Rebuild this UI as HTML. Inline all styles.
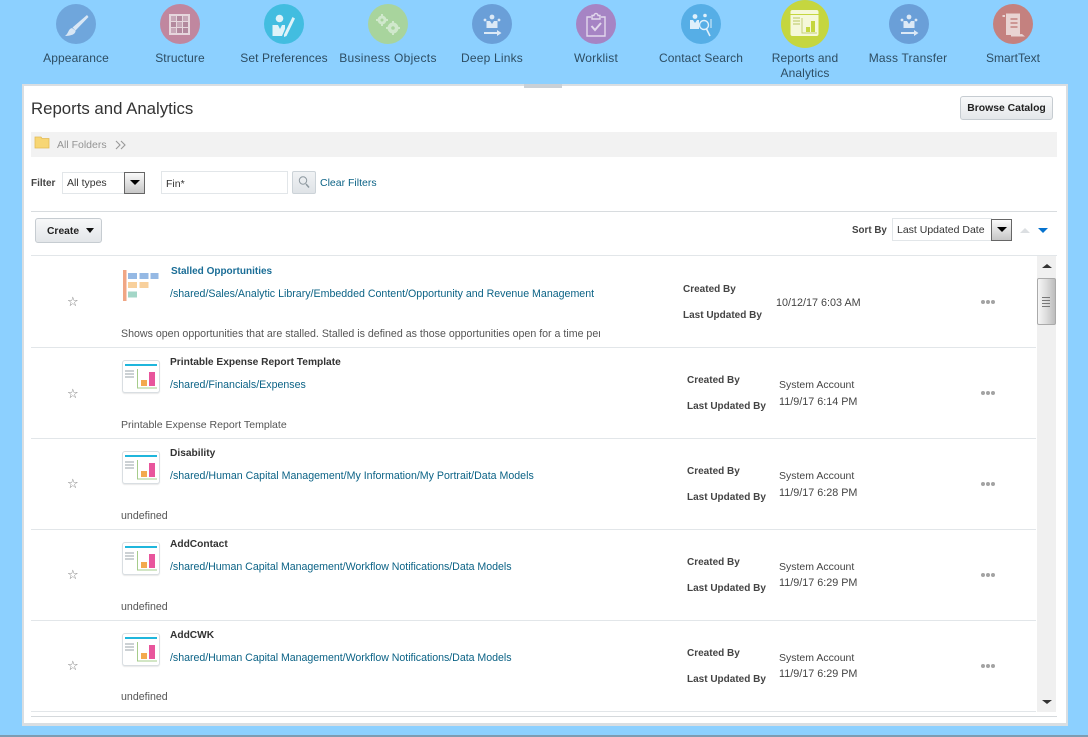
<!DOCTYPE html>
<html><head><meta charset="utf-8"><style>
html,body{margin:0;padding:0}
body{width:1088px;height:737px;overflow:hidden;background:#8cd0ff;position:relative;font-family:"Liberation Sans",sans-serif;font-size:10px;color:#333}
.a,.a *{box-sizing:border-box}
.a{position:absolute;white-space:nowrap}
.c{position:absolute;border-radius:50%;width:40px;height:40px;top:3.5px}
.c svg{position:absolute;left:0;top:0}
.n{position:absolute;width:104px;text-align:center;top:51px;font-size:12px;line-height:15px;color:#2d4d63;white-space:normal;letter-spacing:.1px}
.l{color:#0c6386;font-size:10.630px;line-height:13px}
.b{font-weight:bold}
.t{font-weight:bold;font-size:10.200px;line-height:13px;color:#333}
.hr{position:absolute;left:31px;width:1005px;height:1px;background:#e2e6e9}
.dots{position:absolute;width:16px;height:4px;left:981px}
.dots i{float:left;width:4px;height:4px;border-radius:50%;background:#a3a3a3;margin-right:1px}
.ddb{position:absolute;box-sizing:border-box;width:21px;height:22px;border:1px solid #666;background:linear-gradient(#fafafa,#c6c6c6)}
.ddb:after{content:"";position:absolute;left:5px;top:7px;border:5px solid transparent;border-top:5px solid #000;border-bottom:0}
.tile{position:absolute;box-sizing:border-box;left:122px;width:38px;height:33px;border:1px solid #d9dee2;border-radius:3px;background:#fff;box-shadow:0 1px 1px #e8e8e8}
.d{font-size:10.800px;line-height:13px;color:#444}
.g{font-size:10.630px;line-height:13px;color:#555}
.k{font-size:10px;line-height:13px;color:#444;font-weight:bold}
.s{font-size:13px;line-height:15px;color:#777;font-family:'DejaVu Sans',sans-serif}
</style></head><body>

<div class="c" style="left:56px;background:#6fa6dc"><svg width="40" height="40"><path d="M31 11 L16.500 23.500 L19.500 26.500 L32.500 13Z" fill="#d9e7f5"/><path d="M16 24 C12 25 13 29 9 32 C15 32 20 30 19.500 26.500Z" fill="#d9e7f5"/></svg></div>
<div class="c" style="left:160px;background:#c0879f"><svg width="40" height="40"><rect x="9" y="10" width="21" height="21" fill="#e6d6dd"/><g fill="#ad8197"><rect x="11" y="12" width="5" height="5" opacity=".55"/><rect x="17" y="12" width="5" height="5" opacity=".9"/><rect x="23" y="12" width="5" height="5" opacity=".55"/><rect x="11" y="18" width="5" height="5" opacity=".9"/><rect x="17" y="18" width="5" height="5" opacity=".55"/><rect x="23" y="18" width="5" height="5" opacity=".9"/><rect x="11" y="24" width="5" height="5" opacity=".55"/><rect x="17" y="24" width="5" height="5" opacity=".9"/><rect x="23" y="24" width="5" height="5" opacity=".9"/></g></svg></div>
<div class="c" style="left:264px;background:#42bde0"><svg width="40" height="40" fill="#dff3f9"><circle cx="15.500" cy="14.500" r="3.800"/><path d="M8.500 21 L14 21 L16 25 L18 21 L21 21 L21 25 L18 32 L8.500 32Z"/><path d="M28.500 13 L31 14.500 L22.500 32 L20 33 L20 30.500Z"/></svg></div>
<div class="c" style="left:368px;background:#a8d49d"><svg width="40" height="40" fill="#d0e8cc"><circle cx="14" cy="16" r="4.500"/><circle cx="25" cy="24" r="5.500"/><circle cx="14" cy="16" r="1.500" fill="#a8d49d"/><circle cx="25" cy="24" r="1.800" fill="#a8d49d"/><path d="M13 10h2v2.500h-2zM13 19.500h2v2.500h-2zM8 15h2.500v2H8zM17.500 15h2.500v2h-2.500zM24 17h2v3h-2zM24 28h2v3h-2zM18 23h3v2h-3zM29 23h3v2h-3z"/></svg></div>
<div class="c" style="left:472px;background:#6a9fd8"><svg width="40" height="40" fill="#dce9f6"><circle cx="20" cy="13" r="2.400"/><circle cx="13" cy="16" r="1.400"/><circle cx="27" cy="16" r="1.400"/><path d="M14.500 17 L18 17 L20 20 L22 17 L25.500 17 L25.500 24 L14.500 24Z"/><path d="M12 28 H25 V26 L29.500 29 L25 32 V30 H12Z"/></svg></div>
<div class="c" style="left:576px;background:#a684c4"><svg width="40" height="40" fill="none" stroke="#e2d8ec" stroke-width="1.400"><path d="M15 13 H11 V32 H29 V13 H25"/><path d="M16 15 V11.500 H18 A2 2 0 0 1 22 11.500 H24 V15 Z"/><path d="M15.500 22 L19 26 L25 19" stroke-width="2"/></svg></div>
<div class="c" style="left:681px;background:#56aee6"><svg width="40" height="40" fill="#dff0fb"><circle cx="14" cy="12.500" r="2.400"/><circle cx="24" cy="11.500" r="1.800"/><path d="M9 16 L12 16 L14 19 L16 16 L18 16 L18 25 L9 25Z"/><circle cx="23" cy="21" r="4.500" fill="none" stroke="#dff0fb" stroke-width="1.400"/><path d="M25.500 25 L29 32" stroke="#dff0fb" stroke-width="1.600"/><path d="M30 15 V24" stroke="#dff0fb"/></svg></div>
<div class="c" style="left:781px;top:0;width:48px;height:48px;background:#c5d63f"><svg width="48" height="48"><rect x="9.500" y="10" width="28" height="26" rx="2" fill="#f5f8da"/><path d="M9.500 14 H37.500 V15 H9.500Z" fill="#c5d63f"/><path d="M12 18 H19 M12 21 H19 M12 24 H19" stroke="#c5d07a" stroke-width="1.300"/><path d="M21 18 V33 H36" fill="none" stroke="#c5d07a"/><rect x="25" y="27" width="4" height="5" fill="#c5d63f"/><rect x="30" y="21" width="4" height="11" fill="#c5d63f"/></svg></div>
<div class="c" style="left:889px;background:#6a9fd8"><svg width="40" height="40" fill="#dce9f6"><circle cx="20" cy="13" r="2.400"/><circle cx="13" cy="16" r="1.400"/><circle cx="27" cy="16" r="1.400"/><path d="M14.500 17 L18 17 L20 20 L22 17 L25.500 17 L25.500 24 L14.500 24Z"/><path d="M12 28 H25 V26 L29.500 29 L25 32 V30 H12Z"/></svg></div>
<div class="c" style="left:993px;background:#c4817f"><svg width="40" height="40"><path d="M13 9.500 H27 V31 H13Z" fill="#e9d3d2"/><path d="M17.500 15 H24.500 M17.500 19 H24.500 M17.500 23 H24.500" stroke="#c4817f" stroke-width="1.400"/><path d="M18 31 L29 30 L32 32.500 H18Z" fill="#e9d3d2"/><rect x="9.500" y="11" width="2.500" height="2" fill="#e9d3d2"/></svg></div>

<div class="n" style="left:24px">Appearance</div>
<div class="n" style="left:128px">Structure</div>
<div class="n" style="left:232px">Set Preferences</div>
<div class="n" style="left:336px;letter-spacing:.3px">Business Objects</div>
<div class="n" style="left:440px;letter-spacing:.2px">Deep Links</div>
<div class="n" style="left:544px;letter-spacing:.2px">Worklist</div>
<div class="n" style="left:649px">Contact Search</div>
<div class="n" style="left:753px">Reports and Analytics</div>
<div class="n" style="left:856px;letter-spacing:.2px">Mass Transfer</div>
<div class="n" style="left:961px;letter-spacing:0">SmartText</div>

<div class="a" style="left:22px;top:84px;width:1046px;height:642px;background:#fff;border:2px solid #d9dee2;border-bottom-width:3px"></div>
<div class="a" style="left:524px;top:84px;width:38px;height:4px;background:#c9d0d6"></div>

<div class="a" style="left:31px;top:98.500px;font-size:16.800px;line-height:20px;color:#333">Reports and Analytics</div>
<div class="a b" style="left:960px;top:96px;width:93px;height:24px;border:1px solid #c6ccd1;border-radius:3px;background:linear-gradient(#f8f9fa,#e4e7ea);font-size:10.400px;line-height:24px;text-align:center;color:#222">Browse Catalog</div>

<div class="a" style="left:31px;top:132px;width:1026px;height:25px;background:#f2f2f2"></div>
<svg class="a" style="left:34px;top:136px" width="16" height="13"><path d="M1 1 H7 L8 2.500 H15 V12 H1Z" fill="#f7d674" stroke="#e3bb55" stroke-width=".8"/></svg>
<div class="a" style="left:57px;top:138.500px;font-size:10.500px;line-height:13px;color:#949494">All Folders</div>
<svg class="a" style="left:115px;top:140px" width="12" height="10" fill="none" stroke="#999" stroke-width="1.100"><path d="M1 1 L5 5 L1 9 M6 1 L10 5 L6 9"/></svg>

<div class="a b" style="left:31px;top:177px;font-size:10px;line-height:13px;color:#444">Filter</div>
<div class="a" style="left:62px;top:172px;width:63px;height:22px;border:1px solid #e2e6e9;border-right:0;font-size:10.500px;line-height:20px;padding-left:4px">All types</div>
<div class="ddb" style="left:124px;top:172px"></div>
<div class="a" style="left:161px;top:171px;width:127px;height:23px;border:1px solid #e2e6e9;font-size:10.500px;line-height:24px;padding-left:4px">Fin*</div>
<div class="a" style="left:292px;top:171px;width:24px;height:23px;border:1px solid #ccd3d8;border-radius:2px;background:linear-gradient(#f0f2f4,#dfe3e7)"></div>
<svg class="a" style="left:297px;top:175px" width="14" height="14" fill="none" stroke="#8d989f"><circle cx="6" cy="5.500" r="3.700" stroke-width="1"/><path d="M9 9 L12 12.500" stroke-width="1.500"/></svg>
<div class="a l" style="left:320px;top:177px;font-size:10.500px">Clear Filters</div>

<div class="a" style="left:31px;top:211px;width:1026px;height:1px;background:#d8dcdf"></div>
<div class="a b" style="left:35px;top:218px;width:67px;height:25px;border:1px solid #c6ccd1;border-radius:3px;background:linear-gradient(#f7f8f9,#e3e6e9);font-size:10.300px;line-height:25px;padding-left:11px;color:#222">Create</div>
<div class="a" style="left:86px;top:228px;border:4px solid transparent;border-top:5px solid #111;border-bottom:0"></div>
<div class="a b" style="left:852px;top:224px;font-size:9.800px;line-height:13px;color:#444">Sort By</div>
<div class="a" style="left:892px;top:218px;width:100px;height:23px;border:1px solid #e2e6e9;font-size:10.500px;line-height:23px;padding-left:4px">Last Updated Date</div>
<div class="ddb" style="left:991px;top:219px"></div>
<div class="a" style="left:1020px;top:228px;border:5.500px solid transparent;border-bottom:5px solid #dcdfe2;border-top:0"></div>
<div class="a" style="left:1038px;top:228px;border:5.500px solid transparent;border-top:5px solid #0572ce;border-bottom:0"></div>

<div class="a" style="left:31px;top:255px;width:1026px;height:1px;background:#e2e6e9"></div>
<div class="a" style="left:1037px;top:256px;width:19px;height:456px;background:#f0f0f0"></div>
<div class="a" style="left:1042px;top:264px;border:5px solid transparent;border-bottom:4px solid #333;border-top:0"></div>
<div class="a" style="left:1042px;top:700px;border:5px solid transparent;border-top:4px solid #333;border-bottom:0"></div>
<div class="a" style="left:1037px;top:278px;width:19px;height:47px;border:1px solid #aaa;border-radius:2px;background:linear-gradient(90deg,#f5f5f5,#dcdcdc 50%,#bcbcbc)"></div>
<svg class="a" style="left:1041px;top:296px" width="10" height="13" stroke="#777"><path d="M1 1.500 H9 M1 4.500 H9 M1 7.500 H9 M1 10.500 H9"/></svg>

<div class="hr" style="top:347px"></div><div class="hr" style="top:438px"></div><div class="hr" style="top:529px"></div><div class="hr" style="top:620px"></div><div class="hr" style="top:711px"></div>
<div class="a" style="left:31px;top:716px;width:1026px;height:1px;background:#d5d9dc"></div>

<!-- row 1 -->
<div class="a s" style="left:67px;top:295px">☆</div>
<svg class="a" style="left:122px;top:269px" width="38" height="33"><rect x="1" y="1" width="3.500" height="31" fill="#f0a684"/><g fill="#95b9e4"><rect x="6" y="4" width="9" height="6"/><rect x="17.500" y="4" width="9" height="6"/><rect x="28.500" y="4" width="8" height="6"/></g><g fill="#f8d09c"><rect x="6" y="13" width="9" height="6"/><rect x="17.500" y="13" width="9" height="6"/></g><rect x="6" y="22.500" width="9" height="6" fill="#a3d6c7"/></svg>
<div class="a b" style="left:171px;top:265px;font-size:10px;line-height:13px;color:#1a6d96">Stalled Opportunities</div>
<div class="a l" style="left:170px;top:288px">/shared/Sales/Analytic Library/Embedded Content/Opportunity and Revenue Management</div>
<div class="a g" style="left:121px;top:328px;width:479px;overflow:hidden">Shows open opportunities that are stalled. Stalled is defined as those opportunities open for a time period</div>
<div class="a k" style="left:683px;top:283px">Created By</div>
<div class="a k" style="left:683px;top:309px">Last Updated By</div>
<div class="a d" style="left:776px;top:297px">10/12/17 6:03 AM</div>
<div class="dots" style="top:300px"><i></i><i></i><i></i></div>

<!-- row 2 -->
<div class="a s" style="left:67px;top:387px">☆</div>
<div class="tile" style="top:360px"><svg width="36" height="31" style="position:absolute;left:0;top:0"><rect x="2" y="3" width="32" height="2" fill="#1fb6dc"/><path d="M2 10 H11 M2 13 H11 M2 16 H11" stroke="#9aa3a8"/><path d="M14.500 8 V27 H34" fill="none" stroke="#a6cc8b"/><rect x="18" y="19" width="6" height="6" fill="#f3a94e"/><rect x="26" y="11" width="6" height="14" fill="#e8559c"/></svg></div>
<div class="a t" style="left:170px;top:356px">Printable Expense Report Template</div>
<div class="a l" style="left:170px;top:379px">/shared/Financials/Expenses</div>
<div class="a g" style="left:121px;top:419px;font-size:10.550px">Printable Expense Report Template</div>
<div class="a k" style="left:687px;top:374px">Created By</div>
<div class="a k" style="left:687px;top:400px">Last Updated By</div>
<div class="a g" style="left:779px;top:379px;color:#444;font-size:10.500px">System Account</div>
<div class="a d" style="left:779px;top:396px">11/9/17 6:14 PM</div>
<div class="dots" style="top:391px"><i></i><i></i><i></i></div>

<!-- row 3 -->
<div class="a s" style="left:67px;top:477px">☆</div>
<div class="tile" style="top:451px"><svg width="36" height="31" style="position:absolute;left:0;top:0"><rect x="2" y="3" width="32" height="2" fill="#1fb6dc"/><path d="M2 10 H11 M2 13 H11 M2 16 H11" stroke="#9aa3a8"/><path d="M14.500 8 V27 H34" fill="none" stroke="#a6cc8b"/><rect x="18" y="19" width="6" height="6" fill="#f3a94e"/><rect x="26" y="11" width="6" height="14" fill="#e8559c"/></svg></div>
<div class="a t" style="left:170px;top:447px">Disability</div>
<div class="a l" style="left:170px;top:470px">/shared/Human Capital Management/My Information/My Portrait/Data Models</div>
<div class="a g" style="left:121px;top:510px">undefined</div>
<div class="a k" style="left:687px;top:465px">Created By</div>
<div class="a k" style="left:687px;top:491px">Last Updated By</div>
<div class="a g" style="left:779px;top:470px;color:#444;font-size:10.500px">System Account</div>
<div class="a d" style="left:779px;top:487px">11/9/17 6:28 PM</div>
<div class="dots" style="top:482px"><i></i><i></i><i></i></div>

<!-- row 4 -->
<div class="a s" style="left:67px;top:568px">☆</div>
<div class="tile" style="top:542px"><svg width="36" height="31" style="position:absolute;left:0;top:0"><rect x="2" y="3" width="32" height="2" fill="#1fb6dc"/><path d="M2 10 H11 M2 13 H11 M2 16 H11" stroke="#9aa3a8"/><path d="M14.500 8 V27 H34" fill="none" stroke="#a6cc8b"/><rect x="18" y="19" width="6" height="6" fill="#f3a94e"/><rect x="26" y="11" width="6" height="14" fill="#e8559c"/></svg></div>
<div class="a t" style="left:170px;top:538px">AddContact</div>
<div class="a l" style="left:170px;top:561px;letter-spacing:-.03px">/shared/Human Capital Management/Workflow Notifications/Data Models</div>
<div class="a g" style="left:121px;top:601px">undefined</div>
<div class="a k" style="left:687px;top:556px">Created By</div>
<div class="a k" style="left:687px;top:582px">Last Updated By</div>
<div class="a g" style="left:779px;top:561px;color:#444;font-size:10.500px">System Account</div>
<div class="a d" style="left:779px;top:577px">11/9/17 6:29 PM</div>
<div class="dots" style="top:573px"><i></i><i></i><i></i></div>

<!-- row 5 -->
<div class="a s" style="left:67px;top:659px">☆</div>
<div class="tile" style="top:633px"><svg width="36" height="31" style="position:absolute;left:0;top:0"><rect x="2" y="3" width="32" height="2" fill="#1fb6dc"/><path d="M2 10 H11 M2 13 H11 M2 16 H11" stroke="#9aa3a8"/><path d="M14.500 8 V27 H34" fill="none" stroke="#a6cc8b"/><rect x="18" y="19" width="6" height="6" fill="#f3a94e"/><rect x="26" y="11" width="6" height="14" fill="#e8559c"/></svg></div>
<div class="a t" style="left:170px;top:629px">AddCWK</div>
<div class="a l" style="left:170px;top:652px;letter-spacing:-.03px">/shared/Human Capital Management/Workflow Notifications/Data Models</div>
<div class="a g" style="left:121px;top:691px">undefined</div>
<div class="a k" style="left:687px;top:647px">Created By</div>
<div class="a k" style="left:687px;top:673px">Last Updated By</div>
<div class="a g" style="left:779px;top:652px;color:#444;font-size:10.500px">System Account</div>
<div class="a d" style="left:779px;top:668px">11/9/17 6:29 PM</div>
<div class="dots" style="top:664px"><i></i><i></i><i></i></div>

<div class="a" style="left:0;top:735px;width:1088px;height:2px;background:#7d9cb3"></div>
</body></html>
